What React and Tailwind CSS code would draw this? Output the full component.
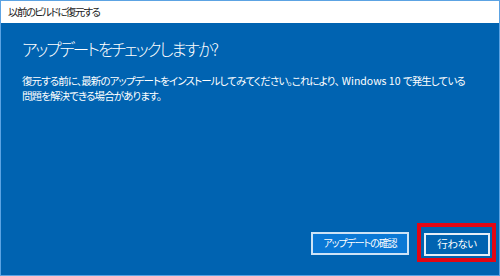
export default function App() {
  const jp = "font-['Noto_Sans_CJK_JP','Noto_Sans',sans-serif] [font-feature-settings:'palt']";
  return (
    <div className={`w-[500px] h-[276px] flex flex-col border border-[#5ca3e3] bg-[#0063b1] ${jp}`}>
      <div className="h-[22px] bg-white flex items-center pl-[7px] text-[10.5px] tracking-[-1.6px] text-[#222] leading-none whitespace-nowrap">
        以前のビルドに復元する
      </div>
      <div className="flex-1 flex flex-col px-[21px] text-white">
        <h1 className="mt-[14px] text-[16.5px] leading-[24px] font-light tracking-[-2px] whitespace-nowrap">
          アップデートをチェックしますか?
        </h1>
        <p className="mt-[13px] text-[10.5px] leading-[14.5px] tracking-[-0.9px] whitespace-nowrap">
          復元する前に、最新のアップデートをインストールしてみてください。これにより<span className="tracking-[2px]">、</span><span className="tracking-[0px]">Windows 10 </span>で発生している<br />
          問題を解決できる場合があります。
        </p>
        <div className="mt-auto mb-[13px] mr-[-18px] flex justify-end items-center gap-[8px]">
          <button className="w-[98px] h-[23px] mt-[1px] border-2 border-[#cde3f6] bg-[#0a78d5] text-[10px] tracking-[-1.1px] text-white leading-none whitespace-nowrap">
            アップデートの確認
          </button>
          <div className="border-4 border-[#e30613] pt-[2px] pb-[2px] pl-[3px] pr-[2px]">
            <button className="w-[66px] h-[23px] border-2 border-[#e6eef7] bg-[#0063b1] text-[10.5px] tracking-[-0.5px] text-white leading-none whitespace-nowrap">
              行わない
            </button>
          </div>
        </div>
      </div>
    </div>
  );
}
